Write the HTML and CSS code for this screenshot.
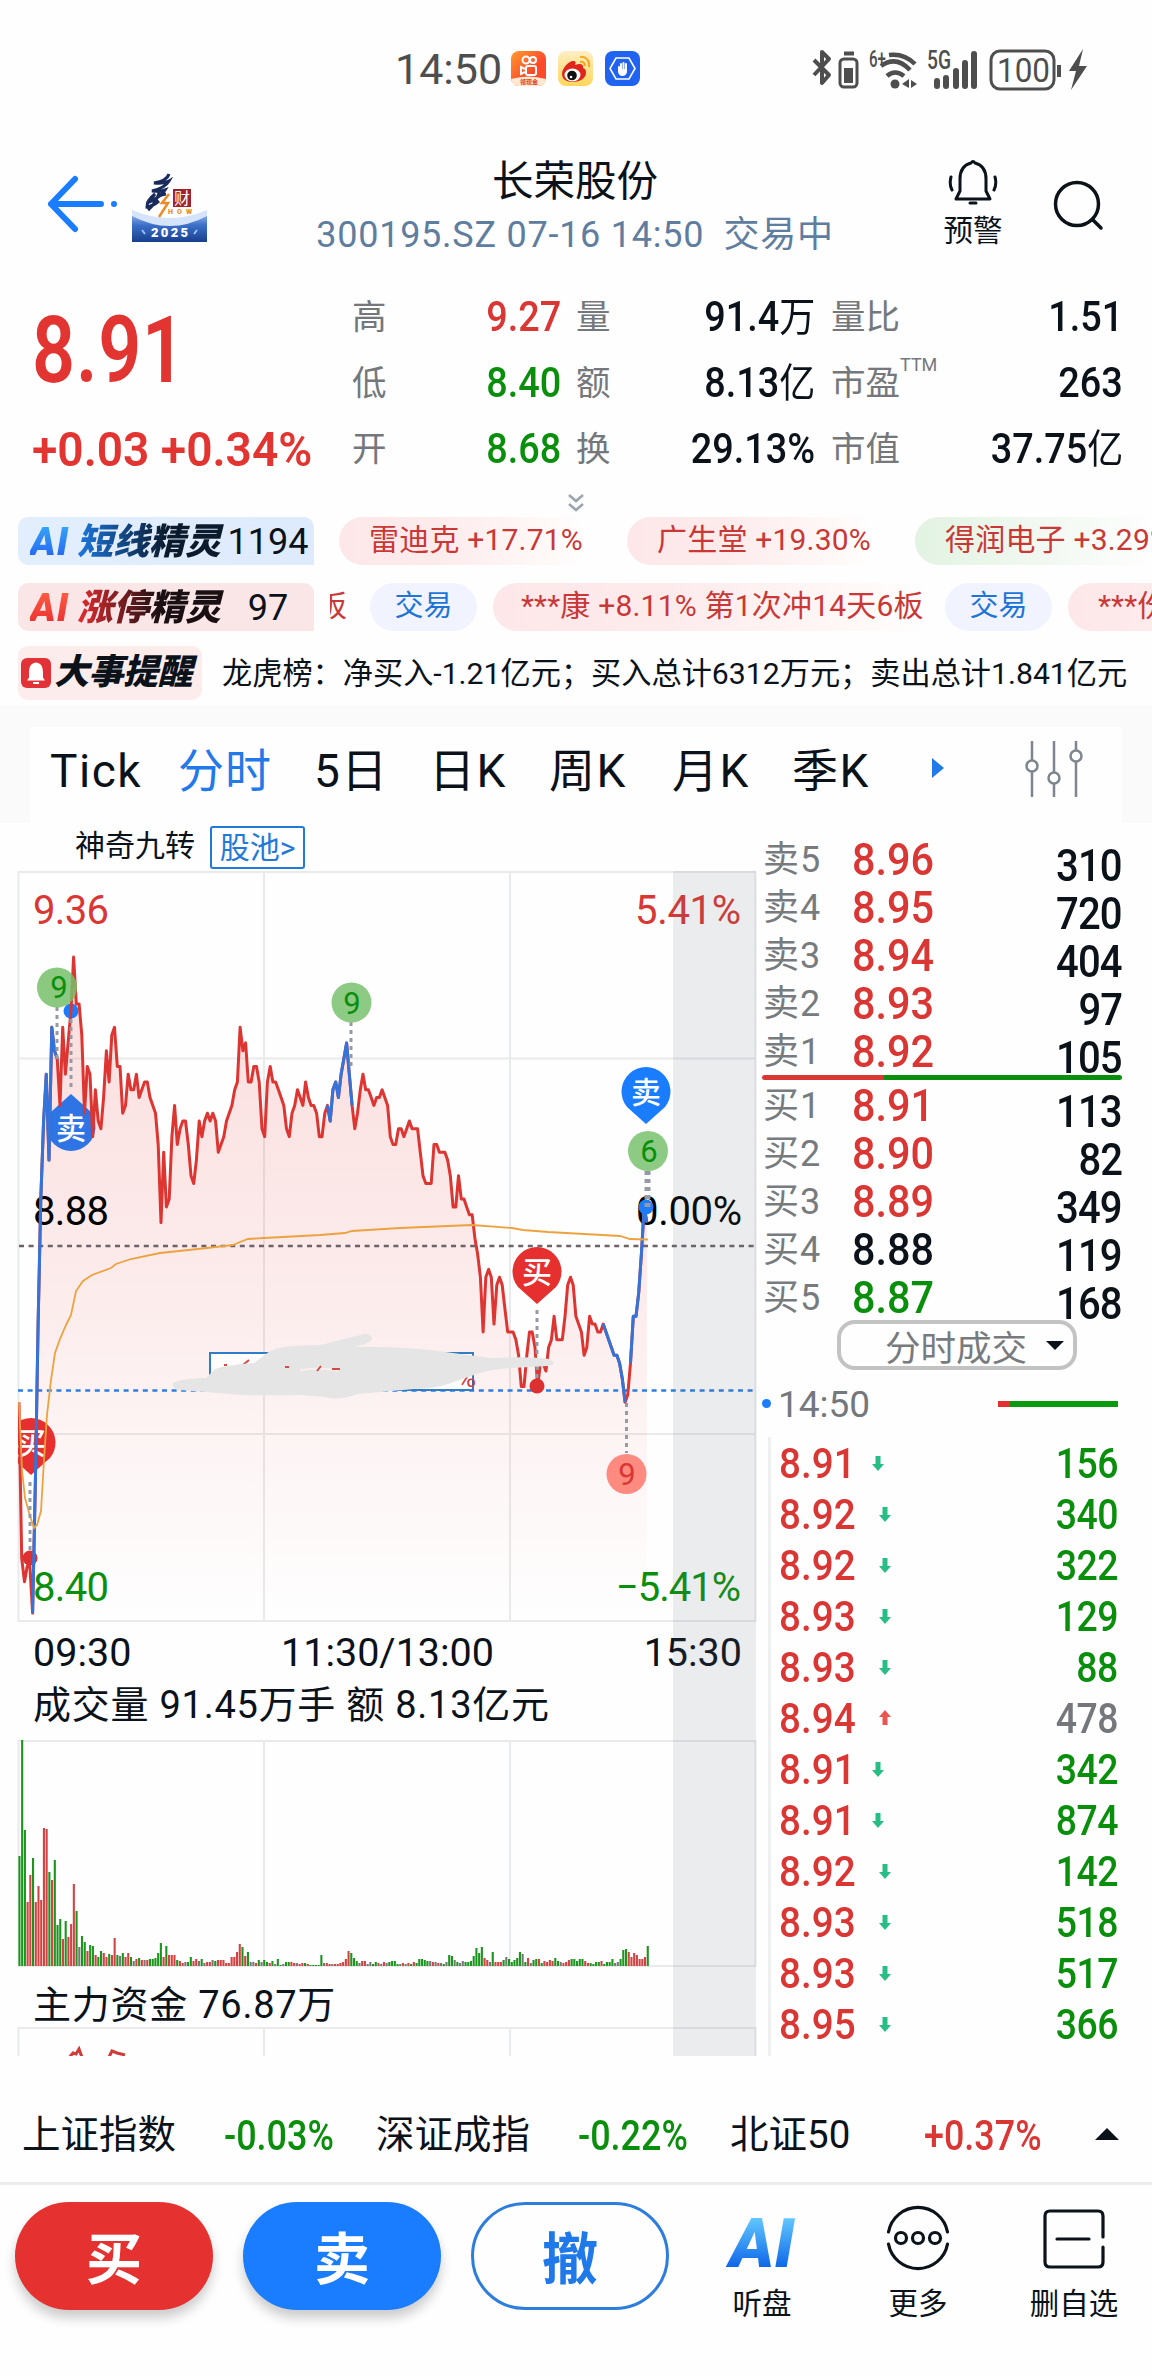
FILE: index.html
```
<!DOCTYPE html>
<html lang="zh-CN">
<head>
    <meta charset="UTF-8">
    <meta name="viewport" content="width=device-width, initial-scale=1.0">
    <title>长荣股份 300195.SZ</title>
    <link rel="stylesheet" href="styles.css">
</head>
<body>
    <div class="status-bar">
        <span class="status-time">14:50</span>
        <svg class="app-icon" viewBox="0 0 35 35">
            <defs><linearGradient id="ks" x1="0" y1="0" x2="1" y2="1"><stop offset="0" stop-color="#ff9a2e"/><stop offset=".6" stop-color="#ff4a2a"/></linearGradient></defs>
            <rect width="35" height="35" rx="8" fill="url(#ks)"/>
            <path d="M0 28q17-5 35 0q-1 7-8 7H8q-7 0-8-7z" fill="#ffe9d0"/>
            <g fill="none" stroke="#fff" stroke-width="2"><circle cx="15" cy="9" r="3.500"/><circle cx="22" cy="9" r="3"/><rect x="15" y="15" width="10" height="9" rx="2"/><path d="M14 18l-4-2v7l4-2"/></g>
            <text x="9" y="33" font-size="6" font-weight="700" fill="#e2402a">领现金</text>
        </svg>
        <svg class="app-icon" viewBox="0 0 35 35">
            <defs><linearGradient id="wb" x1="0" y1="0" x2="0" y2="1"><stop offset="0" stop-color="#fdeec4"/><stop offset="1" stop-color="#ffd65a"/></linearGradient></defs>
            <rect width="35" height="35" rx="8" fill="url(#wb)"/>
            <path d="M4 23c0-6 7-13 11-13 3 0 3 2 2 4 5-2 9-1 8 3 3 1 3 3 3 5 0 5-6 9-13 9S4 28 4 23z" fill="#e1251b"/>
            <ellipse cx="14.500" cy="24" rx="8" ry="6.500" fill="#fff"/><circle cx="14" cy="24.500" r="4.800" fill="#111"/><circle cx="13" cy="26" r="1.300" fill="#fff"/>
            <path d="M22 6c6-1 10 4 9 10M22 11c3-1 5 1 5 4" fill="none" stroke="#f5a623" stroke-width="2"/>
        </svg>
        <svg class="app-icon" viewBox="0 0 35 35">
            <rect width="35" height="35" rx="8" fill="#1f63f0"/>
            <path d="M11 7h13l6 10.500-6 10.500H11l-6-10.500z" fill="none" stroke="#fff" stroke-width="1.600"/>
            <path d="M14 19v-3M16 19v-6M18.500 19v-7M21 19v-6" stroke="#fff" stroke-width="2" stroke-linecap="round"/><path d="M13 18h9v3q-1 4-4.500 4T13 21z" fill="#fff"/>
        </svg>
        <svg class="sys-icons" viewBox="812 44 280 46">
            <g fill="none" stroke="#4e4e4e" stroke-width="4" stroke-linejoin="round">
                <path d="M815 60l15 15-7 8V52l7 7-15 16"/>
                <rect x="841" y="59" width="17" height="28" rx="4" stroke-width="3"/>
                <path d="M845 53.500h10" stroke-width="4"/>
                <path d="M890 55q15-2 26 9M882 66q15-11 29 4M888 76q8-7 17 0" stroke-width="4.500"/>
                <rect x="992" y="51" width="63" height="38" rx="9" stroke-width="3"/>
                <path d="M1060 65v12" stroke-width="4"/>
            </g>
            <g fill="#4e4e4e">
                <rect x="845" y="68" width="9" height="15"/>
                <circle cx="896" cy="84" r="4.500"/><path d="M903 84l7-5v9zM912 80l6 4-6 4z"/>
                <rect x="935" y="78" width="6" height="11" rx="3"/><rect x="944" y="75" width="6" height="14" rx="3"/><rect x="954" y="68" width="6" height="21" rx="3"/><rect x="963" y="60" width="6" height="29" rx="3"/><rect x="972" y="51" width="6" height="38" rx="3"/>
                <path d="M1084 49l-14 22h7l-5 19 16-24h-8z"/>
                <text x="870" y="67" font-size="24" font-weight="500" textLength="17" lengthAdjust="spacingAndGlyphs">6+</text>
                <text x="928" y="69" font-size="25" font-weight="500" textLength="24" lengthAdjust="spacingAndGlyphs">5G</text>
                <text x="998" y="82" font-size="34" textLength="53" lengthAdjust="spacingAndGlyphs">100</text>
            </g>
        </svg>
    </div>

    <header class="header">
        <svg class="back" viewBox="0 0 80 70">
            <path d="M32 10L8 35l24 25M8 35h50" fill="none" stroke="#1a7cff" stroke-width="6" stroke-linecap="round" stroke-linejoin="round"/>
            <circle cx="71" cy="35" r="3" fill="#1a7cff"/>
        </svg>
        <svg class="logo" viewBox="0 0 75 72">
            <defs><linearGradient id="lg" x1="0" y1="0" x2="0" y2="1"><stop offset="0" stop-color="#8fb4ea"/><stop offset=".4" stop-color="#3d6fc8"/><stop offset="1" stop-color="#173f8e"/></linearGradient></defs>
            <path d="M0 44q38 20 75 0v28H0z" fill="url(#lg)"/>
            <path d="M0 40q38 16 75 0v6q-37 20-75 0z" fill="#d5e4fa"/>
            <path d="M37 4q-2 7-15 9 10 1 15-2-4 7-17 10 8 1 13-1-5 8-18 13 5-5 8-9-8 6-8 13 6-1 12-6M28 19q-3 14-12 21M20 32q6-7 14-8" fill="none" stroke="#182b5c" stroke-width="3"/>
            <path d="M37 24l-7 9 6 0-9 14" fill="none" stroke="#ee8b28" stroke-width="2.500"/>
            <rect x="41" y="19" width="18" height="18" fill="#a4222a"/>
            <text x="42" y="34" font-size="16" fill="#fff">财</text>
            <text x="36" y="44" font-size="7" font-weight="900" fill="#ee8b28" textLength="24">HOW</text>
            <text x="19" y="67" font-size="13" font-weight="900" fill="#fff" textLength="37">2025</text>
            <path d="M10 60l3 4M65 60l-3 4" stroke="#9ec1ff" stroke-width="2"/>
        </svg>
        <div class="title">
            <h1>长荣股份</h1>
            <p>300195.SZ 07-16 14:50&nbsp; 交易中</p>
        </div>
        <div class="alert">
            <svg viewBox="0 0 50 48">
                <g fill="none" stroke="#0b121a" stroke-width="3" stroke-linecap="round" stroke-linejoin="round"><path d="M23 5q2-3 4 0c8 2 11 8 11 16v12l4 8H8l4-8V21c0-8 3-14 11-16z"/><path d="M22 45h6M3 19q-2 7 1 13M47 19q2 7-1 13"/></g>
            </svg>
            <span>预警</span>
        </div>
        <svg class="search" viewBox="0 0 54 54"><g fill="none" stroke="#0b121a" stroke-width="3.500" stroke-linecap="round"><circle cx="25" cy="25" r="21.500"/><path d="M41 41l8 8"/></g></svg>
    </header>

    <section class="quote">
        <div class="price">
            <span class="last">8.91</span>
            <span class="change">+0.03 +0.34%</span>
        </div>
        <div class="quote-grid">
            <span>高</span><b class="up">9.27</b><span>量</span><b>91.4<i>万</i></b><span>量比</span><b>1.51</b>
            <span>低</span><b class="down">8.40</b><span>额</span><b>8.13<i>亿</i></b><span>市盈<sup>TTM</sup></span><b>263</b>
            <span>开</span><b class="down">8.68</b><span>换</span><b>29.13%</b><span>市值</span><b>37.75<i>亿</i></b>
        </div>
        <svg class="more-arrow" viewBox="0 0 18 18"><path d="M2 1l7 6 7-6M2 10l7 6 7-6" fill="none" stroke="#9aa3ae" stroke-width="2.500"/></svg>
    </section>

    <section class="news">
        <div class="news-row">
            <div class="badge badge-blue"><em>AI</em><strong>短线精灵</strong><span>1194</span></div>
            <div class="chips">
                <span class="chip chip-red">雷迪克 +17.71%</span>
                <span class="chip chip-red">广生堂 +19.30%</span>
                <span class="chip chip-green">得润电子 +3.29%</span>
            </div>
        </div>
        <div class="news-row">
            <div class="badge badge-red"><em>AI</em><strong>涨停精灵</strong><span>97</span></div>
            <div class="chips chips-limit">
                <span class="cut">板</span>
                <span class="trade">交易</span>
                <span class="chip chip-red chip-long">***康 +8.11% 第1次冲14天6板</span>
                <span class="trade">交易</span>
                <span class="chip chip-red">***份</span>
            </div>
        </div>
        <div class="news-row">
            <div class="badge badge-event">
                <svg viewBox="0 0 30 30"><rect width="30" height="30" rx="6" fill="#e03237"/><path d="M15 4.500c6 1 7 5 7 11v4l2 3H6l2-3v-4c0-6 1-10 7-11zM12 24h6v2h-6z" fill="#fff"/></svg>
                <strong>大事提醒</strong>
            </div>
            <p class="event">龙虎榜：净买入-1.21亿元；买入总计6312万元；卖出总计1.841亿元</p>
        </div>
    </section>

    <nav class="tabs">
        <div class="tabs-inner">
            <span>Tick</span><span class="active">分时</span><span>5日</span><span>日K</span><span>周K</span><span>月K</span><span>季K</span>
            <i class="tab-arrow"></i>
            <svg viewBox="0 0 60 58"><g fill="#fff" stroke="#7d858e" stroke-width="2.500"><path d="M8 1v56M30 1v56M52 1v56"/><circle cx="8" cy="26" r="5.500"/><circle cx="30" cy="38" r="5.500"/><circle cx="52" cy="16" r="5.500"/></g></svg>
        </div>
    </nav>

    <main class="main">
        <section class="chart">
            <div class="chart-head"><span>神奇九转</span><a>股池&gt;</a></div>
            <svg class="price-chart" viewBox="0 871 760 751">
                <defs>
                    <linearGradient id="area" gradientUnits="userSpaceOnUse" x1="0" y1="950" x2="0" y2="1620"><stop offset="0" stop-color="#e8302e" stop-opacity=".16"/><stop offset=".5" stop-color="#e8302e" stop-opacity=".09"/><stop offset="1" stop-color="#e8302e" stop-opacity="0"/></linearGradient>
                    <clipPath id="plot"><rect x="18" y="871" width="738" height="751"/></clipPath>
                </defs>
                <path d="M18.500 872h737v749h-737zM18 1058.500h738M18 1434h738M264 872v749M510 872v749" fill="none" stroke="#e9eaeb" stroke-width="2"/>
                <path id="price-area" fill="url(#area)"/>
                <g font-size="40">
                    <text x="33" y="924" class="up" textLength="76">9.36</text>
                    <text x="33" y="1225" textLength="76">8.88</text>
                    <text x="33" y="1601" class="down" textLength="76">8.40</text>
                    <text x="635" y="924" class="up" textLength="106">5.41%</text>
                    <text x="636" y="1225" textLength="106">0.00%</text>
                    <text x="616" y="1601" class="down" textLength="125">−5.41%</text>
                </g>
                <path d="M19 1246h737" stroke="#6c6267" stroke-width="2.500" stroke-dasharray="5 4.600"/>
                <path d="M18 1390.500h738" stroke="#2f7de0" stroke-width="2.500" stroke-dasharray="5 4.600"/>
                <g clip-path="url(#plot)" text-anchor="middle">
                    <path d="M71 1094l19 17a24.500 24.500 0 1 1-38 0z" fill="#2f74e4"/>
                    <text x="71" y="1139" class="pin">卖</text>
                    <path d="M31 1475l-19-17a24.500 24.500 0 1 1 38 0z" fill="#e5302f"/>
                    <text x="31" y="1454" class="pin">买</text>
                    <circle cx="71" cy="1011" r="7.500" fill="#1c7cff"/>
                    <circle cx="30" cy="1558" r="7.500" fill="#dd3030"/>
                    <g id="price-lines" fill="none" stroke-width="3" stroke-linejoin="round"></g>
                    <path d="M19 1402L22 1470 25 1498 30 1516 34 1528 37 1525 41 1511 44 1460 47 1415 51 1380 55 1353 60 1339 66 1325 71 1315 76 1291 83 1281 92 1275 111 1268 116 1264 131 1259 160 1253 198 1249 233 1245 240 1242 248 1239 264 1238 320 1235 345 1233 352 1231 400 1228 472 1225 512 1228 523 1230 548 1232 620 1236 630 1239 648 1239.500" fill="none" stroke="#eda240" stroke-width="1.800"/>
                    <circle cx="646" cy="1207" r="7.500" fill="#1c7cff"/>
                    <circle cx="537" cy="1386" r="7.500" fill="#dd3030"/>
                    <path d="M57 1007v52M71 1019v72M351 1022v46M646 1171v36M649 1171v36M537 1310v68M626.500 1403v50M30 1482v70" stroke="#969aa5" stroke-width="3" stroke-dasharray="4 4"/>
                    <circle cx="57" cy="987.500" r="20" fill="#75c069" fill-opacity=".85"/><text x="59" y="998" class="turn down">9</text>
                    <circle cx="351.500" cy="1002.500" r="20" fill="#8dca83"/><text x="352" y="1014" class="turn down">9</text>
                    <circle cx="648" cy="1151" r="20" fill="#8dca83"/><text x="649" y="1162" class="turn down">6</text>
                    <circle cx="626.500" cy="1474" r="20" fill="#ff8a80"/><text x="627" y="1485" class="turn up">9</text>
                    <path d="M646 1124l-19-17a24.500 24.500 0 1 1 38 0z" fill="#1a7cff"/><text x="646" y="1103" class="pin">卖</text>
                    <path d="M537 1304l-19-17a24.500 24.500 0 1 1 38 0z" fill="#e5302f"/><text x="537" y="1283" class="pin">买</text>
                </g>
                <rect x="210" y="1353" width="263" height="37" fill="#fff" fill-opacity=".8" stroke="#2f7cc8" stroke-width="2"/>
                <text x="457" y="1387" font-size="26" class="up">%</text>
                <path d="M224 1365h3M243 1365l6-5" stroke="#d44a45" stroke-width="2" fill="none"/>
                <path class="smudge" d="M172 1384q4-5 34-6l8-8q4-4 40-7l12-9q8-7 27-8l28-1 43-11q8 0 8 5-1 4-18 8l26 0q30 1 50 3l61 8q52-2 60 2 6 5-3 6l-37 2q-25 2-37 7l-26 9q-14 5-34 5l-56 5q-20 7-33 3l-25-2q-60 1-70-1l-50-4q-7-1-8-6z"/>
                <path d="M300 1370q25-3 38 1" stroke="#fbeeee" stroke-width="2" fill="none"/>
                <path d="M285 1367h4M317 1371l4-5M332 1369h8" stroke="#d44a45" stroke-width="2" fill="none"/>
            </svg>
            <div class="time-axis"><span>09:30</span><span>11:30/13:00</span><span>15:30</span></div>
            <div class="sub-title">成交量 91.45万手 额 8.13亿元</div>
            <svg class="volume-chart" viewBox="0 1741 760 227">
                <path d="M18.500 1742h737v225h-737zM264 1742v225M510 1742v225" fill="none" stroke="#e9eaeb" stroke-width="2"/>
                <g id="volume-bars"></g>
            </svg>
            <div class="sub-title sub-title-fund">主力资金 76.87万</div>
            <svg class="fund-chart" viewBox="0 2028 760 31">
                <path d="M18.500 2064v-35h737v35M264 2029v35M510 2029v35" fill="none" stroke="#e9eaeb" stroke-width="2"/>
                <path d="M68 2060l5-6 3 1 3-5 4 11M108 2060l4-8 5 2 8 2" fill="none" stroke="#d13c3a" stroke-width="3"/>
            </svg>
            <div class="after-hours"></div>
        </section>

        <aside class="book">
            <div class="levels">
                <div class="level"><span>卖5</span><b class="up">8.96</b><b class="vol">310</b></div>
                <div class="level"><span>卖4</span><b class="up">8.95</b><b class="vol">720</b></div>
                <div class="level"><span>卖3</span><b class="up">8.94</b><b class="vol">404</b></div>
                <div class="level"><span>卖2</span><b class="up">8.93</b><b class="vol">97</b></div>
                <div class="level"><span>卖1</span><b class="up">8.92</b><b class="vol">105</b></div>
            </div>
            <div class="ratio"></div>
            <div class="levels">
                <div class="level"><span>买1</span><b class="up">8.91</b><b class="vol">113</b></div>
                <div class="level"><span>买2</span><b class="up">8.90</b><b class="vol">82</b></div>
                <div class="level"><span>买3</span><b class="up">8.89</b><b class="vol">349</b></div>
                <div class="level"><span>买4</span><b>8.88</b><b class="vol">119</b></div>
                <div class="level"><span>买5</span><b class="down">8.87</b><b class="vol">168</b></div>
            </div>
            <div class="select">分时成交<i></i></div>
            <div class="minute"><i></i><span>14:50</span><div class="minute-ratio"></div></div>
            <div class="trades" id="trades"></div>
        </aside>
    </main>

    <section class="indexes">
        <span>上证指数</span><b class="down">-0.03%</b>
        <span>深证成指</span><b class="down">-0.22%</b>
        <span>北证50</span><b class="up">+0.37%</b>
        <i></i>
    </section>

    <footer class="actions">
        <button class="btn btn-buy">买</button>
        <button class="btn btn-sell">卖</button>
        <button class="btn btn-cancel">撤</button>
        <div class="action"><em>AI</em><span>听盘</span></div>
        <div class="action">
            <svg viewBox="0 0 64 66"><g fill="none" stroke="#0b121a" stroke-width="3.200" stroke-linecap="round"><path d="M2.500 27a30 30 0 0 1 59 0M2.500 39a30 30 0 0 0 59 0"/><circle cx="15" cy="33" r="5.500"/><circle cx="32" cy="33" r="5.500"/><circle cx="49" cy="33" r="5.500"/></g></svg>
            <span>更多</span>
        </div>
        <div class="action">
            <svg viewBox="0 0 64 66"><path d="M61 32V11q0-5-5-5H8q-5 0-5 5v46q0 5 5 5h48q5 0 5-5V42M15 34h32" fill="none" stroke="#0b121a" stroke-width="3.200" stroke-linecap="round"/></svg>
            <span>删自选</span>
        </div>
    </footer>
    <script src="script.js"></script>
</body>
</html>
```
FILE: styles.css
```
* {
    box-sizing: border-box;
}
body {
    margin: 0;
    width: 1152px;
    height: 2376px;
    overflow: hidden;
    background: #fefefe;
    color: #0b121a;
    font-family: Roboto, "Noto Sans CJK SC", sans-serif;
    white-space: nowrap;
}
h1, p {
    margin: 0;
    font-weight: 400;
}
svg {
    display: block;
    flex: none;
}
.up {
    color: #d93634;
    fill: #d93634;
}
.down {
    color: #0a8f0d;
    fill: #0a8f0d;
}

/* status bar */
.status-bar {
    display: flex;
    align-items: center;
    height: 137px;
    padding-left: 395px;
    color: #4e4e4e;
}
.status-time {
    width: 116px;
    font-size: 43px;
}
.app-icon {
    width: 35px;
    height: 35px;
    margin-right: 12px;
}
.sys-icons {
    width: 280px;
    height: 46px;
    margin-left: 159px;
    margin-top: -4px;
    overflow: visible;
}

/* header */
.header {
    display: flex;
    height: 133px;
    padding-left: 43px;
}
.back {
    width: 80px;
    height: 70px;
    margin-top: 32px;
}
.logo {
    width: 75px;
    height: 72px;
    margin: 33px 0 0 9px;
}
.title {
    width: 736px;
    margin-top: 17px;
    text-align: center;
}
.title h1 {
    font-size: 41.5px;
    line-height: 56px;
}
.title p {
    font-size: 36px;
    line-height: 50px;
    color: #5f7d9f;
    letter-spacing: .75px;
}
.alert {
    width: 60px;
    margin: 21px 0 0 0;
    text-align: center;
    font-size: 29.5px;
    line-height: 36px;
}
.alert svg {
    width: 50px;
    height: 48px;
    margin: 0 auto 7px;
}
.search {
    width: 54px;
    height: 54px;
    margin: 42px 0 0 49px;
}

/* quote */
.quote {
    display: flex;
    flex-wrap: wrap;
    height: 247px;
    padding-top: 22px;
}
.price {
    width: 352px;
    height: 197px;
    padding-left: 32px;
    color: #e23431;
    font-weight: 600;
}
.price span {
    display: block;
    transform-origin: left;
}
.last {
    height: 113px;
    padding-top: 4px;
    font-size: 92px;
    line-height: 110px;
    letter-spacing: 1px;
    transform: scaleX(.82);
}
.change {
    font-size: 48px;
    line-height: 90px;
    transform: scaleX(.96);
}
.quote-grid {
    display: grid;
    grid-template-columns: 60px 149px 53px 201px 108px 200px;
    grid-template-rows: repeat(3, 66px);
    width: 800px;
    height: 197px;
    font-size: 34.5px;
    line-height: 50px;
}
.quote-grid > span {
    color: #74787c;
}
.quote-grid > span:nth-child(6n+3) {
    padding-left: 15px;
}
.quote-grid > span:nth-child(6n+5) {
    padding-left: 16px;
}
.quote-grid b {
    justify-self: end;
    font-size: 42px;
    font-weight: 500;
    transform: scaleX(.9);
    transform-origin: right;
}
.quote-grid i {
    font-style: normal;
    font-weight: 400;
    font-size: 40px;
}
.quote-grid sup {
    font-size: 18px;
    line-height: 0;
    vertical-align: 24px;
}
.more-arrow {
    width: 18px;
    height: 18px;
    margin: 0 auto;
}

/* scrolling news */
.news {
    height: 189px;
}
.news-row {
    display: flex;
    height: 66px;
    padding-left: 18px;
}
.badge {
    display: flex;
    flex: none;
    width: 296px;
    height: 48px;
    padding-left: 12px;
    border-radius: 10px 10px 0 10px;
    line-height: 50px;
    font-size: 36px;
}
.badge em {
    width: 47px;
    font-size: 39px;
    font-weight: 900;
    letter-spacing: 1px;
    -webkit-background-clip: text;
    background-clip: text;
    color: transparent;
}
.badge strong {
    width: 150px;
    font-size: 36px;
    font-weight: 800;
    font-style: italic;
    -webkit-background-clip: text;
    background-clip: text;
    color: transparent;
}
.badge > span {
    width: 82px;
    text-align: center;
}
.badge-blue {
    background: linear-gradient(90deg, #e3eefd, #deebfc);
}
.badge-blue em {
    background-image: linear-gradient(#38b6f8, #2457f0);
}
.badge-blue strong {
    background-image: linear-gradient(90deg, #1c78e0, #0b1a2c 60%);
}
.badge-red {
    background: #fbe6e7;
}
.badge-red em {
    background-image: linear-gradient(#ff6a4a, #e8262c);
}
.badge-red strong {
    background-image: linear-gradient(90deg, #e52c30, #1a1013 55%);
}
.badge-event {
    align-items: center;
    width: 184px;
    height: 54px;
    margin-top: -3px;
    padding-left: 3px;
    border-radius: 10px;
    background: #fcecec;
}
.badge-event svg {
    width: 30px;
    height: 30px;
    margin-right: 3px;
}
.badge-event strong {
    color: #0b121a;
    font-size: 35px;
    letter-spacing: -.5px;
}
.chips {
    display: flex;
    flex: 1;
    overflow: hidden;
    font-size: 30px;
    line-height: 46px;
    color: #c93836;
    padding-left: 25px;
}
.chip {
    flex: none;
    width: 245px;
    height: 48px;
    margin-right: 43px;
    padding-left: 30px;
    border-radius: 24px 0 0 24px;
    letter-spacing: .2px;
}
.chip-red {
    background: linear-gradient(90deg, #fde7e9, #fdebec 40%, #fef9f7 85%, #fefefe);
}
.chip-green {
    background: linear-gradient(90deg, #e2f3e2, #f1f8f0 50%, #fefefe);
}
.chips-limit {
    padding-left: 0;
    margin-left: 16px;
}
.chips-limit .chip {
    margin-right: 15px;
}
.chips-limit .chip-long {
    width: 437px;
    padding-left: 28px;
}
.cut {
    flex: none;
    margin: 0 23px 0 -13px;
}
.trade {
    flex: none;
    width: 107px;
    height: 48px;
    margin-right: 16px;
    border-radius: 24px;
    background: #f1f4fe;
    color: #1f74d8;
    font-size: 29px;
    text-align: center;
}
.event {
    padding-left: 20px;
    font-size: 30.2px;
    line-height: 50px;
}

/* period tabs */
.tabs {
    height: 117px;
    padding: 21px 30px 0;
    background: #fafafa;
}
.tabs-inner {
    display: grid;
    grid-template-columns: 128px 136px 115px 120px 123px 120px 140px 92px 60px;
    align-items: center;
    height: 96px;
    padding-left: 20px;
    background: #fefefe;
    font-size: 46px;
    line-height: 86px;
    letter-spacing: 1.5px;
}
.tabs-inner span {
    margin-top: -8px;
}
.tabs-inner .active {
    color: #2379ea;
    letter-spacing: 1px;
}
.tab-arrow {
    width: 0;
    border: 10px solid transparent;
    border-left: 12px solid #2379ea;
    border-right: 0;
    margin-top: -14px;
}
.tabs-inner svg {
    width: 60px;
    height: 58px;
    margin-top: -13px;
}

/* chart column */
.main {
    display: flex;
    height: 1233px;
    overflow: hidden;
}
.chart {
    position: relative;
    width: 760px;
}
.chart-head {
    display: flex;
    height: 48px;
    padding: 3px 0 0 75px;
    font-size: 30px;
    line-height: 40px;
}
.chart-head a {
    width: 95px;
    height: 43px;
    margin-left: 15px;
    border: 2px solid #2379d8;
    border-radius: 3px;
    color: #2379d8;
    text-align: center;
}
.price-chart {
    width: 760px;
    height: 751px;
}
.pin {
    font-size: 30px;
    font-weight: 500;
    fill: #fff;
}
.turn {
    font-size: 31px;
}
.smudge {
    fill: #e5e5e5;
}
.time-axis {
    display: flex;
    justify-content: space-between;
    height: 56px;
    padding: 0 18px 0 33px;
    font-size: 39.5px;
    line-height: 61px;
}
.sub-title {
    height: 62px;
    padding-left: 33px;
    font-size: 38px;
    line-height: 55px;
    letter-spacing: .75px;
}
.sub-title-fund {
    height: 60px;
    line-height: 76px;
}
.volume-chart {
    width: 760px;
    height: 227px;
}
.fund-chart {
    width: 760px;
    height: 31px;
}
/* shading over the 15:00-15:30 session */
.after-hours {
    position: absolute;
    top: 48px;
    left: 673px;
    width: 83px;
    bottom: 0;
    background: rgba(105, 110, 125, .125);
}

/* order book column */
.book {
    width: 362px;
    padding: 13px 0 0 2px;
}
.level {
    display: grid;
    grid-template-columns: 89px 100px 1fr;
    height: 48px;
    line-height: 48px;
    padding-left: 1px;
    font-size: 37px;
    color: #777b7e;
}
.level span {
    font-size: 36px;
    letter-spacing: 1px;
}
.level b {
    font-size: 45px;
    font-weight: 500;
    color: #0b121a;
    transform: scaleX(.92);
    transform-origin: left;
}
.level .up {
    color: #d93634;
}
.level .down {
    color: #0a8f0d;
}
.level .vol {
    justify-self: end;
    padding-top: 6px;
    letter-spacing: -1px;
    transform: scaleX(.89);
    transform-origin: right;
}
.ratio {
    height: 5px;
    margin: -1px 0 2px;
    border-radius: 3px;
    background: linear-gradient(90deg, #d93634 34%, #0a8f0d 34%);
}
.select {
    display: flex;
    align-items: center;
    width: 240px;
    height: 50px;
    margin: -2px 0 0 75px;
    padding-left: 44px;
    border: 4px solid #c3c3c3;
    border-radius: 18px;
    font-size: 35.5px;
    color: #777b7e;
}
.select i {
    margin-left: 19px;
    border: 9px solid transparent;
    border-top: 9px solid #0b121a;
    border-bottom: 0;
}
.minute {
    display: flex;
    align-items: center;
    height: 67px;
    font-size: 37px;
    color: #74787c;
}
.minute i {
    width: 9px;
    height: 9px;
    border-radius: 50%;
    background: #1a7cff;
}
.minute span {
    width: 227px;
    padding: 2px 0 0 7px;
}
.minute-ratio {
    width: 120px;
    height: 6px;
    background: linear-gradient(90deg, #e5302f 10%, #0a9a0d 10%);
}
.trades {
    height: 619px;
    margin-left: 6px;
    padding-left: 8px;
    border-left: 3px solid #eeefef;
}
.trade-row {
    display: flex;
    align-items: center;
    height: 51px;
    width: 339px;
    padding-top: 1px;
    font-size: 42px;
    font-weight: 500;
}
.trade-row b {
    font-weight: 500;
    transform: scaleX(.92);
    transform-origin: left;
}
.trade-row svg {
    width: 12px;
    height: 16px;
    margin-left: 17px;
}
.trade-row .narrow + svg {
    margin-left: 10px;
}
.trade-row .vol {
    margin-left: auto;
    letter-spacing: -.5px;
    transform: scaleX(.89);
    transform-origin: right;
}
.trade-row .flat {
    color: #74787c;
}

/* market indexes */
.indexes {
    display: flex;
    height: 129px;
    padding: 54px 0 0 22px;
    border-bottom: 3px solid #ececec;
    font-size: 38.5px;
    line-height: 50px;
}
.indexes span {
    width: 202px;
}
.indexes b {
    width: 152px;
    font-size: 43px;
    font-weight: 500;
    transform: scaleX(.835);
    transform-origin: left;
}
.indexes span:nth-of-type(3) {
    width: 194px;
}
.indexes i {
    height: 0;
    margin: 18px 0 0 19px;
    border: 12px solid transparent;
    border-bottom: 12px solid #0b121a;
    border-top: 0;
}

/* bottom actions */
.actions {
    display: flex;
    padding: 17px 0 0 15px;
}
.btn {
    width: 198px;
    height: 108px;
    margin: 0 30px 0 0;
    padding: 0 0 3px;
    border: 0;
    border-radius: 54px;
    font: 700 56px/1 "Noto Sans CJK SC", sans-serif;
    color: #fff;
    box-shadow: 0 8px 12px rgba(0, 0, 0, .2);
}
.btn-buy {
    background: #e5312f;
}
.btn-sell {
    background: #1a7cff;
}
.btn-cancel {
    background: #fefefe;
    border: 3px solid #2d7ddd;
    color: #1f79ea;
    box-shadow: none;
}
.action {
    width: 156px;
    font-size: 29.5px;
    line-height: 40px;
    text-align: center;
}
.action:nth-of-type(1) {
    margin-left: -15px;
}
.action svg {
    width: 64px;
    height: 66px;
    margin: 3px auto 13px;
}
.action em {
    display: block;
    height: 82px;
    line-height: 84px;
    font-size: 68px;
    font-weight: 900;
    -webkit-background-clip: text;
    background-clip: text;
    color: transparent;
    background-image: linear-gradient(#62c6ff 20%, #0d66e8 80%);
}
```
FILE: script.js
```
// Price per minute, in cents away from the previous close (8.88)
const ticks = [
    -20, -40, -43, -41, -41, -47, -30, -10, 6, 16, 22, 11, 28, 25, 24, 18, 28, 22, 26, 30,
    37, 31, 31, 27, 17, 23, 22, 14, 20, 16, 15, 19, 25, 21, 27, 28, 23, 23, 17, 18,
    22, 20, 20, 22, 19, 20, 21, 21, 19, 18, 17, 13, 3, 12, 5, 6, 14, 18, 13, 15,
    16, 16, 13, 9, 8, 11, 16, 14, 16, 17, 16, 17, 16, 12, 13, 14, 16, 17, 18, 20,
    21, 28, 25, 26, 21, 21, 23, 23, 21, 15, 14, 21, 23, 21, 21, 20, 19, 18, 15, 14,
    17, 18, 20, 19, 18, 21, 19, 18, 18, 17, 14, 14, 17, 18, 16, 20, 21, 19, 22, 24,
    26, 22, 18, 15, 17, 20, 22, 20, 20, 19, 18, 19, 19, 20, 19, 18, 14, 13, 13, 15,
    15, 14, 15, 16, 15, 15, 15, 12, 9, 8, 8, 8, 13, 13, 12, 12, 12, 11, 9, 5,
    5, 9, 6, 6, 5, 4, 4, 1, -1, -4, -11, -4, -3, -4, -10, -5, -4, -5, -8, -11,
    -11, -11, -12, -14, -18, -18, -14, -11, -11, -13, -18, -15, -15, -16, -13, -12, -9, -12, -12, -12,
    -9, -5, -4, -5, -9, -10, -11, -14, -13, -9, -10, -10, -11, -11, -10, -11, -12, -13, -14, -14,
    -15, -17, -20, -19, -15, -9, -9, -6, -1, 5, 3
];
// Minutes where the nine-turn signal colours the line blue
const blueRanges = [[5, 14], [113, 122], [214, 222], [224, 230]];

const px = m => 19 + m * 2.73;
const py = c => 1246 - c * 7.81;
const points = (a, b) => ticks.slice(a, b + 1).map((c, i) => `${px(a + i).toFixed(1)} ${py(c).toFixed(1)}`).join(' ');

document.getElementById('price-area').setAttribute('d', `M${points(0, 230)}V1621H19Z`);
let lines = `<polyline points="${points(0, 230)}" stroke="#dc3532"/>`;
blueRanges.forEach(([a, b]) => {
    lines += `<polyline points="${points(a, b)}" stroke="#3373dc"/>`;
});
document.getElementById('price-lines').innerHTML = lines;

// Volume bars: height and colour (g = down, r = up, n = flat)
const volumes = `110g 226g 136g 64r 91r 108g 64r 80r 66r 138r 137r 94g 86r 106g 41g 47g 27r 45g 29r 42r
82r 55g 19n 30g 24g 15r 21g 20g 11r 9g 15g 13r 9r 12g 11r 28r 11g 10n 13g 9r
13r 9g 5n 7r 8g 6r 6n 6r 7g 7g 8g 13g 23g 9r 20g 11r 11r 11r 6g 5r
3r 4n 4g 9g 5r 7r 5n 7g 3n 4r 4r 6n 5g 6r 6r 6r 3r 3r 9r 9r
14r 22r 19g 10r 14g 4n 4n 3r 6g 4n 6g 4g 3r 5g 2n 7g 1g 2n 4g 4g
4r 3r 3n 2r 3r 3g 2r 1g 1g 1g 1g 11g 3n 3r 2r 2n 2r 2r 3r 4r
7r 15r 13g 8g 5g 3n 5r 5r 2n 4n 2g 4g 3r 2n 4r 3n 4g 5g 5g 2g
2n 3r 2n 3r 2g 4r 3g 7g 7g 6g 5g 5n 4r 4n 3r 3n 2g 4n 11g 10g
6n 4g 3n 5n 4g 4g 5g 10g 18g 13g 19g 8r 6r 4n 14g 4r 4r 4r 6g 9n
7g 4g 6g 8g 14g 12n 4g 8r 3n 6g 7g 7r 3g 5r 4r 6r 5r 8g 5g 4n
3r 4r 6r 7g 7g 5g 7g 7g 5r 3r 3g 2g 4g 4g 5r 2g 4g 4g 7g 3n
4n 7g 16g 17g 14r 9r 13r 11r 7r 7r 9r 20g`.split(/\s+/);
const colors = { g: '#1c951f', r: '#d24443', n: '#777' };
document.getElementById('volume-bars').innerHTML = volumes.map((v, i) => {
    const h = parseInt(v);
    return `<rect x="${(18.4 + i * 2.72).toFixed(2)}" y="${1967 - h}" width="2.1" height="${h}" fill="${colors[v.slice(-1)]}"/>`;
}).join('');

const trades = [
    ['8.91', 156], ['8.92', 340], ['8.92', 322], ['8.93', 129], ['8.93', 88], ['8.94', 478, 'up'],
    ['8.91', 342], ['8.91', 874], ['8.92', 142], ['8.93', 518], ['8.93', 517], ['8.95', 366]
];
document.getElementById('trades').innerHTML = trades.map(([price, vol, dir]) => {
    const arrow = dir === 'up'
        ? '<svg viewBox="0 0 12 16"><path d="M6 0l6 7H8.500v8h-5V7H0z" fill="#ea5552"/></svg>'
        : '<svg viewBox="0 0 12 16"><path d="M6 16l6-7H8.500V1h-5v8H0z" fill="#27bd84"/></svg>';
    const narrow = price.endsWith('1') ? ' narrow' : '';
    return `<div class="trade-row"><b class="up${narrow}">${price}</b>${arrow}<b class="vol ${dir === 'up' ? 'flat' : 'down'}">${vol}</b></div>`;
}).join('');
```
